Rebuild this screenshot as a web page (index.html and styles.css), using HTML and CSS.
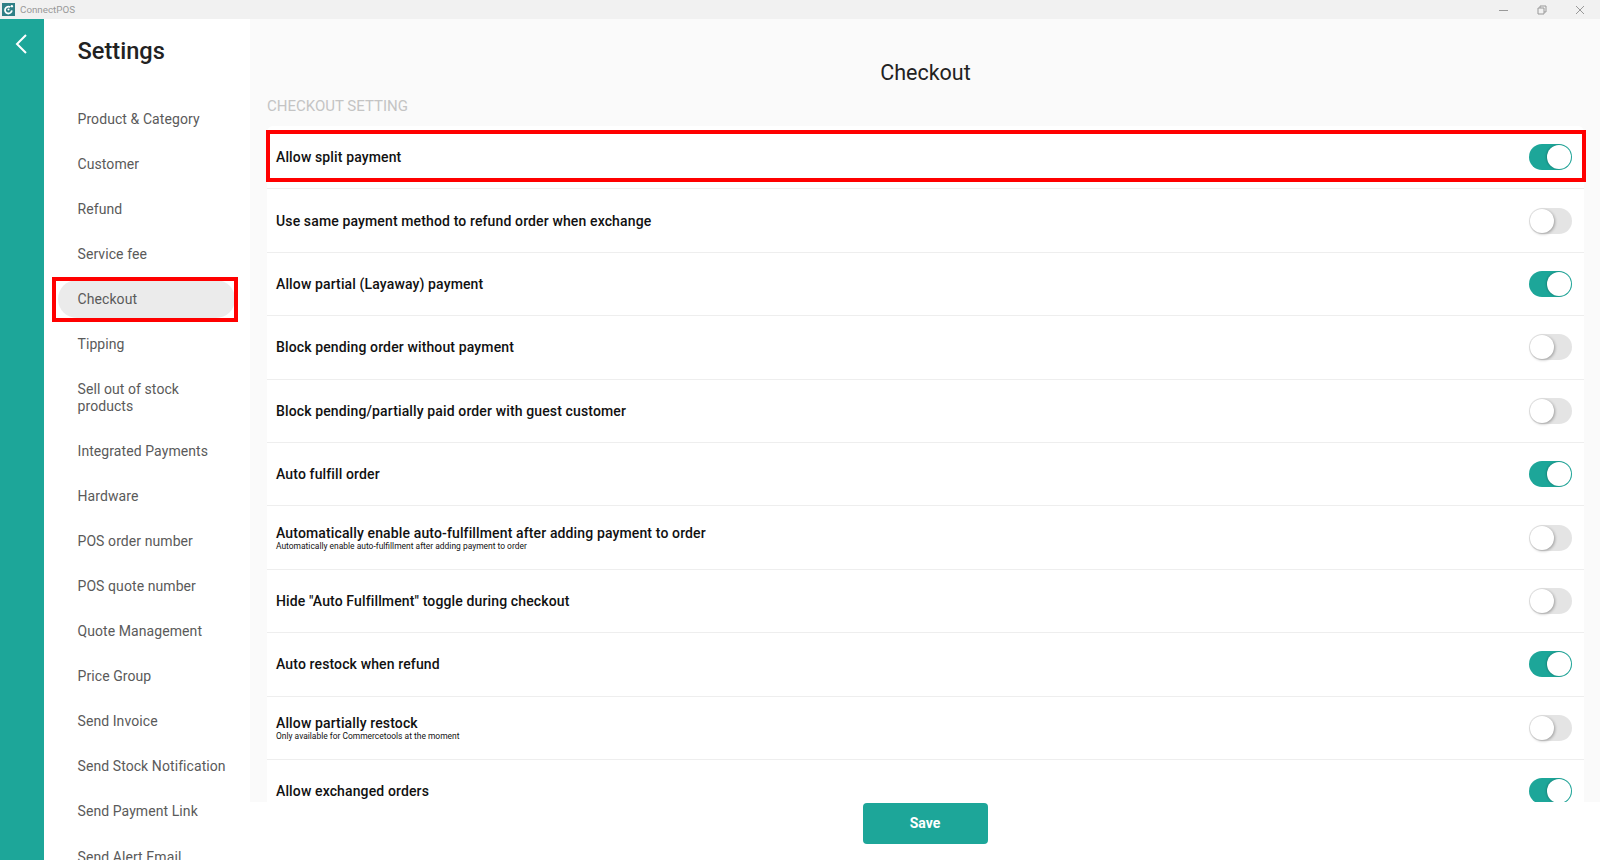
FILE: index.html
```html
<!DOCTYPE html>
<html lang="en">
<head>
<meta charset="utf-8">
<title>ConnectPOS</title>
<link rel="stylesheet" href="styles.css">
</head>
<body>
<div class="app">
  <header class="titlebar">
    <div class="brand">
      <svg class="logo" viewBox="0 0 14 14"><rect width="14" height="14" fill="#2f7f86"/><path d="M8.8 4.4A3.7 3.7 0 1 0 10.6 8" fill="none" stroke="#fff" stroke-width="1.9"/><circle cx="7" cy="7" r="1.1" fill="#fff"/><circle cx="10.6" cy="3.4" r="1.3" fill="#fff"/></svg>
      <span>ConnectPOS</span>
    </div>
    <div class="winctl">
      <svg viewBox="0 0 10 10"><path d="M0 5.5H9" stroke="#999" fill="none"/></svg>
      <svg viewBox="0 0 10 10"><path d="M1 3H7V9H1ZM3 3V1H9V7H7" stroke="#999" fill="none"/></svg>
      <svg viewBox="0 0 10 10"><path d="M1 1L9 9M9 1L1 9" stroke="#999" fill="none"/></svg>
    </div>
  </header>
  <div class="body">
    <aside class="rail">
      <svg class="back" viewBox="0 0 14 22"><path d="M12 2L3 11L12 20" fill="none" stroke="#fff" stroke-width="2"/></svg>
    </aside>
    <nav class="side">
      <h1>Settings</h1>
      <ul>
        <li>Product &amp; Category</li>
        <li>Customer</li>
        <li>Refund</li>
        <li>Service fee</li>
        <li class="active">Checkout</li>
        <li>Tipping</li>
        <li>Sell out of stock<br>products</li>
        <li>Integrated Payments</li>
        <li>Hardware</li>
        <li>POS order number</li>
        <li>POS quote number</li>
        <li>Quote Management</li>
        <li>Price Group</li>
        <li>Send Invoice</li>
        <li>Send Stock Notification</li>
        <li>Send Payment Link</li>
        <li>Send Alert Email</li>
      </ul>
    </nav>
    <main class="main">
      <div class="scroll">
        <h2>Checkout</h2>
        <h3>CHECKOUT SETTING</h3>
        <section class="card">
          <div class="row marked"><div class="label">Allow split payment</div><span class="toggle on"></span></div>
          <div class="row"><div class="label">Use same payment method to refund order when exchange</div><span class="toggle"></span></div>
          <div class="row"><div class="label">Allow partial (Layaway) payment</div><span class="toggle on"></span></div>
          <div class="row"><div class="label">Block pending order without payment</div><span class="toggle"></span></div>
          <div class="row"><div class="label">Block pending/partially paid order with guest customer</div><span class="toggle"></span></div>
          <div class="row"><div class="label">Auto fulfill order</div><span class="toggle on"></span></div>
          <div class="row"><div class="label">Automatically enable auto-fulfillment after adding payment to order<small>Automatically enable auto-fulfillment after adding payment to order</small></div><span class="toggle"></span></div>
          <div class="row"><div class="label">Hide "Auto Fulfillment" toggle during checkout</div><span class="toggle"></span></div>
          <div class="row"><div class="label">Auto restock when refund</div><span class="toggle on"></span></div>
          <div class="row"><div class="label">Allow partially restock<small>Only available for Commercetools at the moment</small></div><span class="toggle"></span></div>
          <div class="row"><div class="label">Allow exchanged orders</div><span class="toggle on"></span></div>
        </section>
      </div>
      <footer class="actions"><button class="save">Save</button></footer>
    </main>
  </div>
</div>
</body>
</html>
```
FILE: styles.css
```css
* { box-sizing: border-box; }
html, body { margin: 0; height: 100%; overflow: hidden; }
body { font-family: Roboto, "Liberation Sans", sans-serif; color: #222; background: #fff; }
.app { height: 860px; display: flex; flex-direction: column; }

.titlebar { height: 19px; flex: none; background: #f1f1f1; display: flex; justify-content: space-between; align-items: center; }
.brand { display: flex; align-items: center; gap: 5px; padding-left: 2px; font-size: 9.8px; color: #999; }
.logo { width: 13px; height: 13px; display: block; }
.winctl { display: flex; gap: 28px; padding-right: 15px; }
.winctl svg { width: 10px; height: 10px; display: block; }

.body { flex: 1; display: flex; min-height: 0; }
.rail { width: 44px; flex: none; background: #1da699; padding: 14px 0 0 14px; }
.back { width: 14px; height: 22px; display: block; }

.side { width: 206px; flex: none; background: #fff; overflow: hidden; padding-left: 14px; }
.side h1 { margin: 18px 0 0 19.5px; font-size: 23.6px; line-height: 28px; font-weight: 500; color: #222; }
.side ul { list-style: none; margin: 34.5px 0 0; padding: 0; }
.side li { width: 177px; margin-bottom: 6.6px; padding: 11px 0 11px 19.5px; font-size: 14px; line-height: 16.5px; letter-spacing: .08px; color: #5a5a5a; }
.side li.active { background: #ebebeb; border-radius: 20px; position: relative; }
.side li.active::after { content: ""; position: absolute; left: -6px; right: -3px; top: -3px; bottom: -3.5px; border: 4px solid #f00; }

.main { flex: 1; min-width: 0; display: flex; flex-direction: column; background: #fafafa; }
.scroll { flex: 1; min-height: 0; overflow: hidden; padding: 0 16px 0 17px; }
.scroll h2 { margin: 41px 0 0; text-align: center; font-size: 21.5px; line-height: 26px; font-weight: 400; color: #222; }
.scroll h3 { margin: 12px 0 0; font-size: 15px; line-height: 16px; font-weight: 400; color: #c4c4c4; }
.card { margin-top: 12px; background: #fff; border-radius: 6px 6px 0 0; }
.row { height: 63.4px; padding: 0 12px 0 9px; display: flex; align-items: center; justify-content: space-between; border-bottom: 1px solid #eeeeee; position: relative; }
.row.marked::after { content: ""; position: absolute; left: -1px; right: -2px; top: 3.5px; bottom: 6.5px; border: 4px solid #f00; }
.label { font-size: 14px; line-height: 16px; font-weight: 500; letter-spacing: .13px; color: #111; }
.label small { display: block; margin-top: 1px; font-size: 8.45px; line-height: 9px; font-weight: 400; letter-spacing: 0; }
.toggle { width: 43px; height: 26px; flex: none; border-radius: 13px; background: #e4e4e4; position: relative; }
.toggle::after { content: ""; position: absolute; left: 1px; top: 1px; width: 24px; height: 24px; border-radius: 50%; background: #fff; box-shadow: 1px 1px 3px rgba(0,0,0,.3); }
.toggle.on { background: #1da699; }
.toggle.on::after { left: 18px; box-shadow: -1px 0 2px rgba(0,0,0,.2); }

.actions { height: 58px; flex: none; background: #fff; display: flex; justify-content: center; align-items: flex-start; padding-top: .5px; }
.save { width: 125px; height: 41.5px; border: 0; border-radius: 4px; background: #1da699; color: #fff; font: 700 14px Roboto, sans-serif; }
```
